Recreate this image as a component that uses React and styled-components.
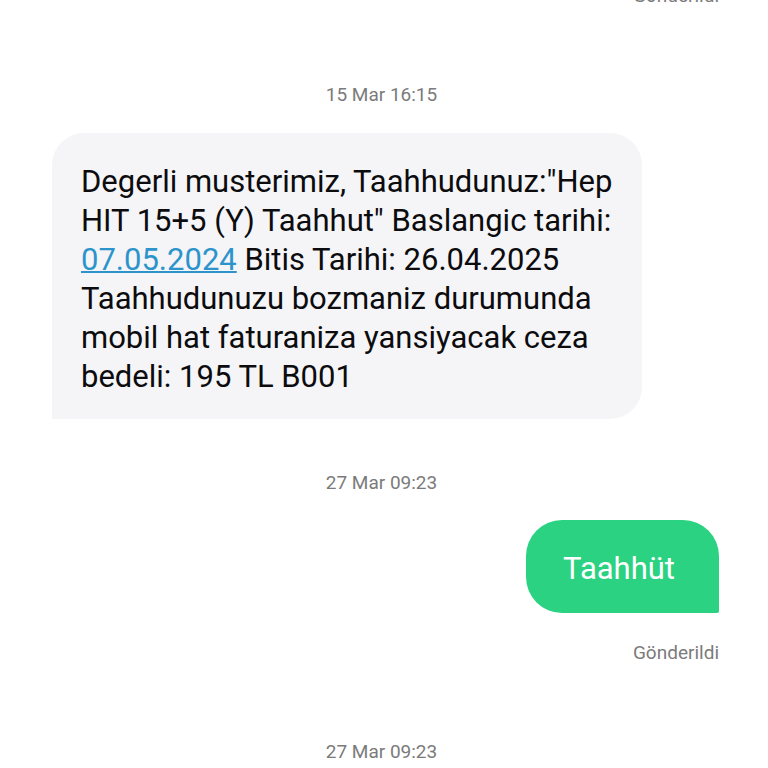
import React from "react";
import styled, { createGlobalStyle } from "styled-components";

const GlobalStyle = createGlobalStyle`
  * { box-sizing: border-box; }
  body { margin: 0; background: #ffffff; }
`;

const Conversation = styled.main`
  display: flex;
  flex-direction: column;
  height: 100vh;
  overflow: hidden;
  padding: 0 49px 0 52px;
  font-family: Roboto, "Noto Sans", sans-serif;
  background: #ffffff;
`;

const Timestamp = styled.time`
  flex: none;
  align-self: center;
  margin-top: ${({ $gap }) => $gap}px;
  margin-right: 8px;
  font-size: 19px;
  line-height: 24px;
  color: #7b7b7b;
`;

const Status = styled.span`
  flex: none;
  align-self: flex-end;
  margin-top: ${({ $gap }) => $gap}px;
  font-size: 19px;
  line-height: 24px;
  color: #7b7b7b;
`;

const Bubble = styled.p`
  flex: none;
  margin: 0;
  font-size: 31px;
`;

const Received = styled(Bubble)`
  align-self: flex-start;
  max-width: 590px;
  margin-top: 26px;
  padding: 29px 25px 23px 29px;
  line-height: 39px;
  color: #0c0c0e;
  background: #f5f5f8;
  border-radius: 32px 32px 32px 0;
`;

const Sent = styled(Bubble)`
  align-self: flex-end;
  margin-top: 25px;
  padding: 29px 44px 24px 37px;
  line-height: 40px;
  color: #ffffff;
  background: #2bd281;
  border-radius: 36px 36px 2px 36px;
`;

const DateLink = styled.a`
  color: #2c94cb;
  text-decoration: underline;
  text-decoration-thickness: 2px;
`;

export default function App() {
  return (
    <>
      <GlobalStyle />
      <Conversation>
        <Status $gap={-16}>Gönderildi</Status>
        <Timestamp $gap={75}>15 Mar 16:15</Timestamp>
        <Received>
          Degerli musterimiz, Taahhudunuz:"Hep HIT 15+5 (Y) Taahhut" Baslangic
          tarihi: <DateLink href="#">07.05.2024</DateLink> Bitis Tarihi:
          26.04.2025 Taahhudunuzu bozmaniz durumunda mobil hat faturaniza
          yansiyacak ceza bedeli: 195 TL B001
        </Received>
        <Timestamp $gap={52}>27 Mar 09:23</Timestamp>
        <Sent>Taahhüt</Sent>
        <Status $gap={28}>Gönderildi</Status>
        <Timestamp $gap={75}>27 Mar 09:23</Timestamp>
      </Conversation>
    </>
  );
}
